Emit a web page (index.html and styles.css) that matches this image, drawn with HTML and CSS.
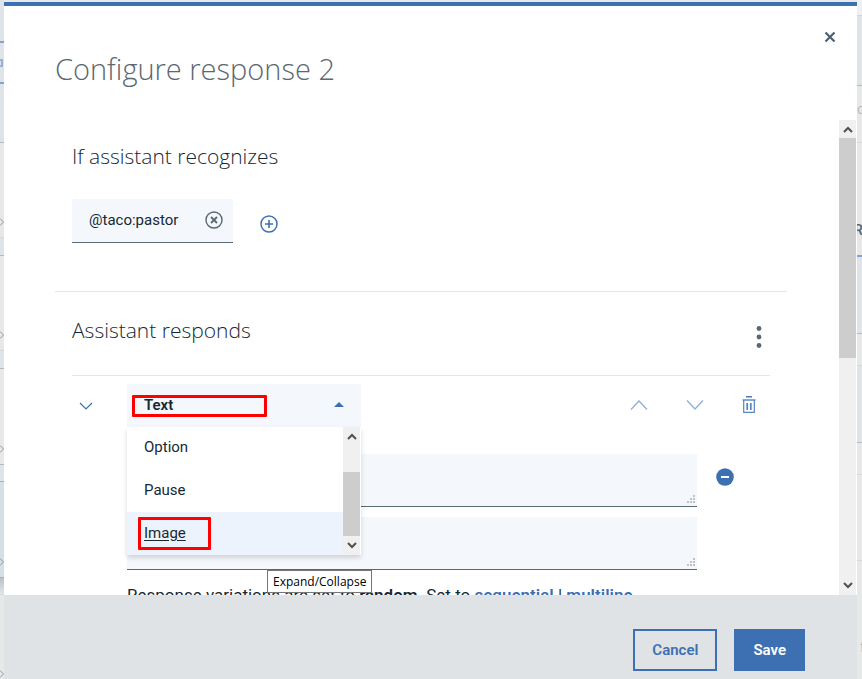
FILE: index.html
```html
<!DOCTYPE html>
<html lang="en">
<head>
<meta charset="utf-8">
<title>Configure response 2</title>
<link rel="stylesheet" href="styles.css">
</head>
<body>
<div class="page">
  <div class="edge edge-left" aria-hidden="true">
    <div class="seg h43 cool line-blue"></div>
    <div class="seg h41 cool line-blue end"><span class="tag"></span></div>
    <div class="seg h59 cool line-grey"></div>
    <div class="seg h95 line-soft end"><svg class="more" viewBox="0 0 4 8"><path d="M0 0.5 3.5 4 0 7.5"/></svg></div>
    <div class="seg h18 cool line-grey"></div>
    <div class="seg h95 line-soft end"><svg class="more" viewBox="0 0 4 8"><path d="M0 0.5 3.5 4 0 7.5"/></svg></div>
    <div class="seg h18 cool line-grey"></div>
    <div class="seg h96 line-grey end"><svg class="more" viewBox="0 0 4 8"><path d="M0 0.5 3.5 4 0 7.5"/></svg></div>
    <div class="seg h17 cool line-steel"></div>
    <div class="seg h96 active line-steel end"><svg class="more" viewBox="0 0 4 8"><path d="M0 0.5 3.5 4 0 7.5"/></svg></div>
    <div class="seg h17 shade line-soft"></div>
    <div class="seg h95 line-soft end"><svg class="more" viewBox="0 0 4 8"><path d="M0 0.5 3.5 4 0 7.5"/></svg></div>
  </div>

  <main class="modal" role="dialog" aria-labelledby="title">
    <header class="modal-head">
      <h1 id="title">Configure response 2</h1>
      <button class="icon-btn close" type="button" aria-label="Close">
        <svg width="12" height="12" viewBox="0 0 12 12"><path d="M1.5 1.5 10.5 10.5M10.5 1.5 1.5 10.5" stroke="#4d6070" stroke-width="2.2" fill="none"/></svg>
      </button>
    </header>

    <div class="modal-body">
      <div class="content">
        <section class="recognizes">
          <h2>If assistant recognizes</h2>
          <div class="conditions">
            <div class="chip">
              <span>@taco:pastor</span>
              <button class="icon-btn" type="button" aria-label="Remove condition">
                <svg width="18" height="18" viewBox="0 0 18 18" fill="none" stroke="#5a6872"><circle cx="9" cy="9" r="8" stroke-width="1.4"/><path d="M6 6 12 12M12 6 6 12" stroke-width="1.8"/></svg>
              </button>
            </div>
            <button class="icon-btn" type="button" aria-label="Add condition">
              <svg width="18" height="18" viewBox="0 0 18 18" fill="none" stroke="#3d70b2"><circle cx="9" cy="9" r="8" stroke-width="1.5"/><path d="M9 5V13M5 9H13" stroke-width="1.6"/></svg>
            </button>
          </div>
        </section>

        <section class="responds">
          <div class="responds-head">
            <h2>Assistant responds</h2>
            <button class="icon-btn" type="button" aria-label="Options">
              <svg width="6" height="22" viewBox="0 0 6 22" fill="#5a6872"><circle cx="3" cy="2.5" r="2.4"/><circle cx="3" cy="11" r="2.4"/><circle cx="3" cy="19.5" r="2.4"/></svg>
            </button>
          </div>

          <div class="response">
            <div class="toolbar">
              <button class="icon-btn expand" type="button" aria-label="Expand/Collapse">
                <svg width="14" height="8" viewBox="0 0 14 8"><path d="M1 1 7 7 13 1" fill="none" stroke="#3d70b2" stroke-width="1.2"/></svg>
              </button>
              <div class="dropdown">
                <button class="dropdown-toggle" type="button" aria-haspopup="listbox" aria-expanded="true" aria-controls="types">
                  <span>Text</span>
                  <svg width="10" height="5" viewBox="0 0 10 5"><path d="M0 5 5 0 10 5Z" fill="#3d70b2"/></svg>
                </button>
                <span class="mark mark-text"></span>
                <div class="menu">
                  <ul id="types" role="listbox" aria-label="Response type">
                    <li role="option">Option</li>
                    <li role="option">Pause</li>
                    <li role="option" class="hover"><span class="underlined">Image</span><span class="mark mark-image"></span></li>
                  </ul>
                  <div class="scrollbar" aria-hidden="true">
                    <svg width="10" height="7" viewBox="0 0 10 7"><path d="M1 6 5 2 9 6"/></svg>
                    <div class="track menu-track"><div class="thumb"></div></div>
                    <svg width="10" height="7" viewBox="0 0 10 7"><path d="M1 1 5 5 9 1"/></svg>
                  </div>
                </div>
              </div>
              <div class="actions">
                <button class="icon-btn" type="button" aria-label="Move up">
                  <svg width="18" height="10" viewBox="0 0 18 10"><path d="M1 9.5 9 1 17 9.5" fill="none" stroke="#93b0d8" stroke-width="1.4"/></svg>
                </button>
                <button class="icon-btn" type="button" aria-label="Move down">
                  <svg width="18" height="10" viewBox="0 0 18 10"><path d="M1 0.5 9 9 17 0.5" fill="none" stroke="#93b0d8" stroke-width="1.4"/></svg>
                </button>
                <button class="icon-btn" type="button" aria-label="Delete response">
                  <svg width="14" height="18" viewBox="0 0 14 18" fill="none" stroke="#5585c0"><path d="M4 0.8H10" stroke="#3d70b2" stroke-width="1.4"/><path d="M0.5 4H13.5" stroke-width="1.4"/><path d="M1.7 4V16.4H12.3V4" stroke-width="1.2"/><path d="M5.2 7V14M8.8 7V14" stroke-width="1.7"/></svg>
                </button>
              </div>
            </div>

            <div class="variations">
              <div class="variation">
                <div class="field">
                  <textarea aria-label="Response variation 1"></textarea>
                  <svg class="grip" width="9" height="9" viewBox="0 0 9 9"><path d="M6 0h2v2h-2zM3 3h2v2h-2zM6 3h2v2h-2zM0 6h2v2h-2zM3 6h2v2h-2zM6 6h2v2h-2z"/></svg>
                </div>
                <button class="icon-btn remove" type="button" aria-label="Remove variation">
                  <svg width="18" height="18" viewBox="0 0 18 18"><circle cx="9" cy="9" r="8.8" fill="#3d70b2"/><path d="M5 9H13" stroke="#fff" stroke-width="2"/></svg>
                </button>
              </div>
              <div class="variation">
                <div class="field">
                  <textarea aria-label="Response variation 2"></textarea>
                  <svg class="grip" width="9" height="9" viewBox="0 0 9 9"><path d="M6 0h2v2h-2zM3 3h2v2h-2zM6 3h2v2h-2zM0 6h2v2h-2zM3 6h2v2h-2zM6 6h2v2h-2z"/></svg>
                </div>
              </div>
              <p class="note">Response variations are set to <b>random</b>. Set to <a href="#sequential">sequential</a> | <a href="#multiline">multiline</a>
                <span class="tooltip" role="tooltip">Expand/Collapse</span>
              </p>
            </div>
          </div>
        </section>
      </div>
      <div class="scrollbar" aria-hidden="true">
        <svg width="10" height="7" viewBox="0 0 10 7"><path d="M1 6 5 2 9 6"/></svg>
        <div class="track body-track"><div class="thumb"></div></div>
        <svg width="10" height="7" viewBox="0 0 10 7"><path d="M1 1 5 5 9 1"/></svg>
      </div>
    </div>

    <footer class="modal-foot">
      <button class="btn btn-secondary" type="button">Cancel</button>
      <button class="btn btn-primary" type="button">Save</button>
    </footer>
  </main>

  <div class="edge edge-right" aria-hidden="true">
    <div class="seg h16 pale line-soft"></div>
    <div class="seg h70 cool line-grey"></div>
    <div class="seg h57 line-soft center"><span class="faint">o</span></div>
    <div class="seg h114 line-blue end"><span class="name">R</span></div>
    <div class="seg h77 cool line-grey"></div>
    <div class="seg h32 line-soft"></div>
    <div class="seg h77 cool line-grey"></div>
    <div class="seg h32 line-soft"></div>
    <div class="seg h86 line-soft"></div>
    <div class="seg rest"><span class="faint">f</span></div>
  </div>
</div>
</body>
</html>
```

FILE: styles.css
```css
* { box-sizing: border-box; }

body {
  margin: 0;
  background: #e7e9e8;
  color: #152935;
  font-family: Roboto, "Open Sans", sans-serif;
  font-size: 15px;
  line-height: 20px;
}

h1, h2, p, ul { margin: 0; padding: 0; }
h1, h2 { font-family: "Open Sans", "Noto Sans", sans-serif; font-weight: 300; }
button, textarea { font: inherit; color: inherit; }
svg { display: block; flex: none; }

.page {
  display: grid;
  grid-template-columns: 4px minmax(0, 1fr) 5px;
  height: 100vh;
  overflow: hidden;
}

/* Page visible behind the dialog */
.edge { display: flex; flex-direction: column; overflow: hidden; }
.seg { display: flex; flex: none; background: #e7e9e8; border-bottom: 1px solid transparent; }
.end { align-items: flex-end; padding-bottom: 11px; }
.center { align-items: center; padding-bottom: 10px; }
.cool { background: #dfe4e8; }
.pale { background: #f0f0f2; }
.active { background: #d5dfe6; }
.shade { background: linear-gradient(#b9c3ca, #e2e4e5); }
.line-blue { border-bottom: 2px solid #85a3cf; }
.line-grey { border-bottom-color: #b4babf; }
.line-soft { border-bottom-color: #d6d9db; }
.line-steel { border-bottom-color: #9db2c4; }
.h16 { height: 16px; } .h17 { height: 17px; } .h18 { height: 18px; }
.h32 { height: 32px; } .h41 { height: 41px; } .h43 { height: 43px; }
.h57 { height: 57px; } .h59 { height: 59px; } .h70 { height: 70px; }
.h77 { height: 77px; } .h86 { height: 86px; } .h95 { height: 95px; }
.h96 { height: 96px; } .h114 { height: 114px; }
.rest { padding: 76px 0 0 3px; height: 120px; }
.more { width: 4px; height: 8px; fill: none; stroke: #8d979e; }
.tag { width: 3px; height: 8px; margin-bottom: 4px; border: 2px solid #9db2d2; border-left: 0; }
.faint { color: #b8bcbf; font-size: 14px; }
.name { color: #5a6872; font-size: 14px; font-weight: 600; margin-left: -3px; margin-bottom: 4px; }

/* Dialog */
.modal {
  display: flex;
  flex-direction: column;
  min-height: 0;
  margin-top: 2px;
  border-top: 4px solid #3d70b2;
  background: #fff;
}

.modal-head {
  display: flex;
  justify-content: space-between;
  align-items: flex-start;
  height: 114px;
  flex: none;
  padding: 25px 21px 0 51px;
}
h1 {
  padding-top: 18px;
  color: #5a6872;
  font-size: 29px;
  line-height: 40px;
}

.icon-btn {
  display: flex;
  flex: none;
  padding: 0;
  border: 0;
  background: none;
  cursor: pointer;
}

.modal-body { display: flex; flex: 1; min-height: 0; overflow: hidden; }
.content { flex: 1; min-width: 0; padding: 20px 52px 0 51px; }

h2 { font-size: 21px; line-height: 32px; }

.recognizes { padding: 0 17px 48px; border-bottom: 1px solid #e3e5e7; }
.conditions { display: flex; align-items: center; gap: 27px; margin-top: 27px; }
.chip {
  display: flex;
  align-items: center;
  gap: 27px;
  height: 44px;
  padding: 0 10px 2px 17px;
  border-bottom: 1px solid #5a6872;
  background: #f4f7fb;
}
.conditions > .icon-btn { padding-top: 6px; }

.responds { padding: 22px 17px 0; }
.responds-head {
  display: flex;
  justify-content: space-between;
  align-items: center;
  height: 62px;
  padding: 0 8px 29px 0;
  border-bottom: 1px solid #e3e5e7;
}
.responds-head .icon-btn { padding-top: 14px; }

.toolbar { display: flex; align-items: center; gap: 34px; padding: 8px 14px 0 7px; }
.dropdown { position: relative; width: 234px; }
.dropdown-toggle {
  display: flex;
  justify-content: space-between;
  align-items: center;
  width: 100%;
  height: 43px;
  padding: 0 17px 2px;
  border: 0;
  background: #f4f7fb;
  font-weight: 600;
}
.menu {
  position: absolute;
  z-index: 2;
  top: 100%;
  left: 0;
  right: 0;
  display: flex;
  height: 128px;
  background: #fff;
  box-shadow: 0 3px 5px rgba(0, 0, 0, 0.15);
}
.menu ul { display: flex; flex-direction: column; flex: 1; list-style: none; }
.menu li {
  position: relative;
  display: flex;
  align-items: center;
  flex: 1;
  padding: 0 17px 2px;
}
.menu .hover { background: #edf3fc; }
.underlined { text-decoration: underline; text-underline-offset: 2px; }

.mark { position: absolute; border: 3px solid #f00; border-radius: 1px; pointer-events: none; }
.mark-text { top: 11px; left: 5px; width: 135px; height: 22px; }
.mark-image { top: 5px; left: 11px; width: 73px; height: 33px; }

.actions { display: flex; align-items: center; gap: 38px; margin-left: auto; padding-bottom: 2px; }

.scrollbar {
  display: flex;
  flex-direction: column;
  align-items: center;
  width: 17px;
  flex: none;
  margin-right: 1px;
  padding: 6px 0;
  background: #f0f0f0;
}
.scrollbar svg { fill: none; stroke: #505050; stroke-width: 2; }
.track { flex: 1; width: 100%; }
.thumb { width: 100%; background: #cdcdcd; }
.body-track { padding-top: 5px; }
.body-track .thumb { height: 220px; }
.menu-track { padding-top: 32px; }
.menu-track .thumb { height: 64px; }

.variations { padding: 27px 0 0 55px; }
.variation { display: flex; gap: 19px; margin-bottom: 10px; }
.field { position: relative; flex: 0 1 570px; }
.field textarea {
  display: block;
  width: 100%;
  height: 53px;
  padding: 8px 16px;
  border: 0;
  border-bottom: 1px solid #5a6872;
  background: #f4f7fb;
  resize: none;
}
.grip { position: absolute; right: 1px; bottom: 3px; fill: #bfc1c3; }
.remove { align-self: flex-start; padding-top: 14px; }

.note { position: relative; margin-top: 13px; font-size: 17px; line-height: 24px; white-space: nowrap; }
.note b, .note a { font-weight: 600; }
.note a { color: #3d70b2; text-decoration: none; }
.tooltip {
  position: absolute;
  top: -13px;
  left: 140px;
  padding: 0 5px;
  border: 1px solid #767676;
  background: #fff;
  color: #000;
  font-family: "Open Sans", sans-serif;
  font-size: 12px;
  line-height: 21px;
}

.modal-foot {
  position: relative;
  display: flex;
  justify-content: flex-end;
  align-items: flex-start;
  gap: 17px;
  height: 84px;
  flex: none;
  padding: 34px 52px 0 0;
  background: #dfe3e6;
}
.btn {
  height: 42px;
  padding: 0 17px;
  border: 2px solid #3d70b2;
  font-weight: 600;
  cursor: pointer;
}
.btn-secondary { background: transparent; color: #3d70b2; }
.btn-primary { background: #3d70b2; color: #fff; }
```
